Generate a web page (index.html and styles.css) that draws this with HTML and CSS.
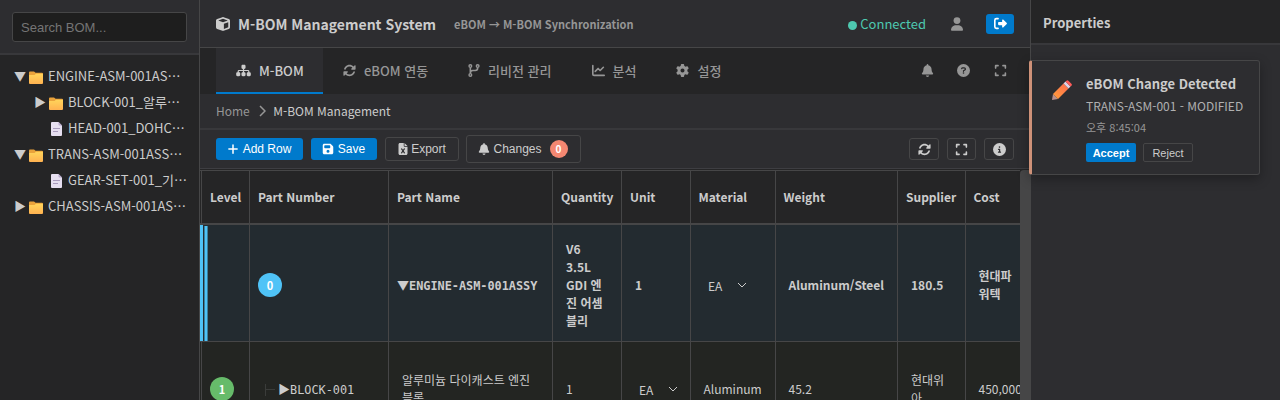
FILE: index.html
```html
<!DOCTYPE html>
<html lang="ko">
<head>
<meta charset="utf-8">
<title>M-BOM Management System</title>
<link rel="stylesheet" href="styles.css">
</head>
<body>
<svg class="defs" width="0" height="0">
<defs>
<linearGradient id="fg" x1="0" y1="0" x2="0" y2="1"><stop offset="0" stop-color="#ffd45a"/><stop offset="1" stop-color="#ffb251"/></linearGradient>
<linearGradient id="pg" x1="1" y1="0" x2="0" y2="1"><stop offset="0" stop-color="#ff6a50"/><stop offset="1" stop-color="#ff9f3a"/></linearGradient>
<symbol id="folder" viewBox="0 0 14 13"><path d="M0 1.5Q0 .5 1 .5h4l1.6 1.3H13q1 0 1 1V6H0z" fill="#e9a23b"/><path d="M0 4h5.5l1.5-1.2h7V12q0 1-1 1H1q-1 0-1-1z" fill="url(#fg)"/></symbol>
<symbol id="doc" viewBox="0 0 11 14"><path d="M1 0h6.5L11 3.5V13q0 1-1 1H1q-1 0-1-1V1q0-1 1-1z" fill="#e6dff0"/><path d="M7.5 0L11 3.5H8.5q-1 0-1-1z" fill="#b9aacb"/><path d="M2 6.5h7M2 9.5h5" stroke="#a99bbd" stroke-width="1.2"/></symbol>
<symbol id="cube" viewBox="0 0 512 512"><path d="M234.5 5.7c13.900-5 29.100-5 43.100 0l192 68.600C495 83.400 512 107.500 512 134.600V377.400c0 27-17 51.200-42.500 60.300l-192 68.600c-13.900 5-29.100 5-43.100 0l-192-68.600C17 428.600 0 404.500 0 377.400V134.600c0-27 17-51.200 42.500-60.300l192-68.600zM256 66L82.300 128 256 190l173.700-62L256 66zm32 368.600l160-57.100v-188L288 246.600v188z"/></symbol>
<symbol id="sitemap" viewBox="0 0 576 512"><path d="M208 80c0-26.500 21.500-48 48-48h64c26.500 0 48 21.500 48 48v64c0 26.500-21.500 48-48 48h-8v40h152c30.900 0 56 25.100 56 56v32h8c26.500 0 48 21.500 48 48v64c0 26.500-21.500 48-48 48h-64c-26.500 0-48-21.500-48-48v-64c0-26.500 21.500-48 48-48h8v-32c0-4.400-3.600-8-8-8H312v40h8c26.500 0 48 21.500 48 48v64c0 26.500-21.500 48-48 48h-64c-26.500 0-48-21.500-48-48v-64c0-26.500 21.500-48 48-48h8v-40H112c-4.400 0-8 3.600-8 8v32h8c26.500 0 48 21.500 48 48v64c0 26.500-21.500 48-48 48H48c-26.500 0-48-21.500-48-48v-64c0-26.500 21.500-48 48-48h8v-32c0-30.900 25.100-56 56-56h152v-40h-8c-26.500 0-48-21.500-48-48z"/></symbol>
<symbol id="sync" viewBox="0 0 512 512"><path d="M142.900 142.900c62.200-62.200 162.700-62.500 225.300-1L327 183c-6.900 6.900-8.900 17.200-5.200 26.200s12.500 14.800 22.200 14.800H472c13.300 0 24-10.700 24-24V72c0-9.700-5.800-18.500-14.800-22.200s-19.300-1.700-26.200 5.200L413.400 96.600c-87.600-86.500-228.700-86.200-315.800 1C73.200 122 55.600 150.700 44.800 181.400c-5.900 16.700 2.900 34.900 19.500 40.800s34.900-2.900 40.800-19.500c7.700-21.800 20.200-42.300 37.800-59.800zM16 312V440c0 9.700 5.800 18.500 14.800 22.200s19.300 1.700 26.200-5.200l41.600-41.600c87.600 86.500 228.700 86.200 315.800-1c24.400-24.400 42.100-53.100 52.900-83.700c5.900-16.700-2.900-34.900-19.500-40.800s-34.900 2.900-40.800 19.500c-7.700 21.800-20.200 42.300-37.800 59.800c-62.200 62.200-162.700 62.500-225.300 1L185 329c6.900-6.900 8.900-17.200 5.200-26.200s-12.500-14.800-22.200-14.800H40c-13.300 0-24 10.700-24 24z"/></symbol>
<symbol id="branch" viewBox="0 0 448 512"><g fill="none" stroke="currentColor"><circle cx="80" cy="80" r="52" stroke-width="56"/><circle cx="368" cy="80" r="52" stroke-width="56"/><circle cx="80" cy="432" r="52" stroke-width="56"/><path d="M80 150v212M80 352c0-53 43-96 96-96h96c53 0 96-43 96-96v-10" stroke-width="64"/></g></symbol>
<symbol id="chart" viewBox="0 0 512 512"><path d="M32 64v336q0 48 48 48h400M128 288l112-112 80 80 128-128" fill="none" stroke="currentColor" stroke-width="64" stroke-linecap="round" stroke-linejoin="round"/></symbol>
<symbol id="gear" viewBox="0 0 512 512"><path d="M495.9 166.6c3.2 8.7 .5 18.4-6.4 24.6l-43.3 39.4c1.100 8.300 1.700 16.800 1.700 25.400s-.6 17.100-1.700 25.400l43.300 39.400c6.900 6.200 9.600 15.900 6.400 24.600c-4.400 11.900-9.700 23.300-15.800 34.300l-4.700 8.100c-6.600 11-14 21.400-22.100 31.200c-5.900 7.200-15.700 9.600-24.500 6.800l-55.700-17.700c-13.400 10.300-28.200 18.900-44 25.400l-12.500 57.100c-2 9.100-9 16.300-18.200 17.800c-13.800 2.300-28 3.500-42.500 3.500s-28.700-1.200-42.500-3.500c-9.200-1.500-16.200-8.700-18.200-17.800l-12.500-57.100c-15.800-6.500-30.600-15.100-44-25.400L83.100 425.900c-8.800 2.800-18.600 .3-24.500-6.800c-8.100-9.800-15.500-20.200-22.100-31.200l-4.700-8.100c-6.100-11-11.400-22.400-15.800-34.300c-3.200-8.700-.5-18.400 6.400-24.600l43.300-39.400C64.600 273.100 64 264.600 64 256s.6-17.100 1.700-25.400L22.400 191.200c-6.900-6.200-9.600-15.900-6.400-24.600c4.400-11.900 9.700-23.300 15.800-34.300l4.700-8.100c6.600-11 14-21.400 22.100-31.200c5.900-7.200 15.700-9.600 24.500-6.800l55.700 17.700c13.400-10.300 28.200-18.900 44-25.400l12.500-57.100c2-9.100 9-16.300 18.200-17.800C227.300 1.200 241.500 0 256 0s28.700 1.200 42.500 3.500c9.200 1.500 16.200 8.700 18.200 17.800l12.500 57.100c15.800 6.500 30.600 15.100 44 25.400l55.700-17.700c8.800-2.800 18.600-.3 24.500 6.800c8.100 9.800 15.500 20.200 22.100 31.200l4.700 8.100c6.100 11 11.400 22.400 15.800 34.300zM256 336a80 80 0 1 0 0-160 80 80 0 1 0 0 160z"/></symbol>
<symbol id="bell" viewBox="0 0 448 512"><path d="M224 0c-17.700 0-32 14.300-32 32V51.200C119 66 64 130.600 64 208v18.800c0 47-17.300 92.400-48.500 127.600l-7.400 8.300c-8.400 9.400-10.400 22.900-5.300 34.400S19.400 416 32 416H416c12.600 0 24-7.400 29.200-18.900s3.100-25-5.300-34.400l-7.400-8.300C401.300 319.200 384 273.900 384 226.800V208c0-77.400-55-142-128-156.800V32c0-17.700-14.300-32-32-32zm45.300 493.300c12-12 18.700-28.300 18.700-45.300H160c0 17 6.700 33.300 18.700 45.300s28.300 18.700 45.300 18.700s33.300-6.700 45.300-18.700z"/></symbol>
<symbol id="help" viewBox="0 0 512 512"><circle cx="256" cy="256" r="256"/><path d="M184 185c5-20 20-33 42-33h56c28 0 49 20 49 45 0 17-9 32-25 41l-50 30v22" fill="none" stroke="#252526" stroke-width="48" stroke-linecap="round"/><circle cx="256" cy="352" r="32" fill="#252526"/></symbol>
<symbol id="expand" viewBox="0 0 448 512"><path d="M32 160V64h96M320 64h96v96M32 352v96h96M416 352v96h-96" fill="none" stroke="currentColor" stroke-width="64" stroke-linecap="round" stroke-linejoin="round"/></symbol>
<symbol id="info" viewBox="0 0 512 512"><circle cx="256" cy="256" r="256"/><path d="M216 248h44v112M216 360h80" fill="none" stroke="#2d2d30" stroke-width="48" stroke-linecap="round" stroke-linejoin="round"/><circle cx="256" cy="160" r="32" fill="#2d2d30"/></symbol>
<symbol id="user" viewBox="0 0 448 512"><circle cx="224" cy="128" r="128"/><path d="M178.300 304C79.800 304 0 383.800 0 482.300C0 498.700 13.300 512 29.700 512H418.300c16.400 0 29.700-13.300 29.700-29.700C448 383.800 368.200 304 269.700 304H178.300z"/></symbol>
<symbol id="logout" viewBox="0 0 512 512"><path d="M160 64H96q-64 0-64 64v256q0 64 64 64h64" fill="none" stroke="currentColor" stroke-width="64" stroke-linecap="round"/><path d="M503 273L361 409c-16 15-41 4-41-18v-71H192c-18 0-32-14-32-32v-64c0-18 14-32 32-32h128v-71c0-22 25-33 41-18l142 136c9 10 9 24 0 34z"/></symbol>
<symbol id="plus" viewBox="0 0 448 512"><path d="M224 80v352M48 256h352" fill="none" stroke="currentColor" stroke-width="64" stroke-linecap="round"/></symbol>
<symbol id="save" viewBox="0 0 448 512"><path fill-rule="evenodd" d="M64 32C28.700 32 0 60.700 0 96v320c0 35.300 28.700 64 64 64h320c35.300 0 64-28.700 64-64V173.300c0-17-6.700-33.300-18.700-45.300L352 50.700C340 38.700 323.700 32 306.700 32H64zm0 96c0-17.700 14.300-32 32-32h192c17.700 0 32 14.300 32 32v64c0 17.700-14.300 32-32 32H96c-17.700 0-32-14.300-32-32v-64zm160 160a64 64 0 1 1 0 128 64 64 0 1 1 0-128z"/></symbol>
<symbol id="excel" viewBox="0 0 384 512"><path d="M64 0C28.700 0 0 28.700 0 64v384c0 35.300 28.700 64 64 64h256c35.300 0 64-28.700 64-64V160H256c-17.700 0-32-14.300-32-32V0zM256 0v128h128z"/><path d="M132 252l120 168M252 252L132 420" stroke="#2d2d30" stroke-width="48" stroke-linecap="round"/></symbol>
<symbol id="pencil" viewBox="0 0 20 20"><path d="M0 20l1-6L6 19z" fill="#b8908f"/><path d="M1 14L11.500 3.500l5 5L6 19z" fill="url(#pg)"/><path d="M11.500 3.500L13.500 1.500l5 5-2 2z" fill="#ddd3e6"/><path d="M13.500 1.500L14.400.7q1-1 2 0l3 3q1 1 0 2l-.9.8z" fill="#ff5b59"/></symbol>
<symbol id="down" viewBox="0 0 10 6"><path d="M1 1l4 4 4-4" fill="none" stroke="currentColor" stroke-width="1"/></symbol>
<symbol id="next" viewBox="0 0 7 12"><path d="M1 1l5 5-5 5" fill="none" stroke="currentColor" stroke-width="1.500"/></symbol>
</defs>
</svg>
<div class="app">
<aside class="sidebar">
  <div class="search-wrap"><input class="search" placeholder="Search BOM..."></div>
  <div class="tree">
    <div class="node"><span class="arrow">▼</span><svg class="folder"><use href="#folder"/></svg><span>ENGINE-ASM-001AS…</span></div>
    <div class="node child"><span class="arrow">▶</span><svg class="folder"><use href="#folder"/></svg><span>BLOCK-001_알루…</span></div>
    <div class="node child"><span class="arrow"></span><svg class="doc"><use href="#doc"/></svg><span>HEAD-001_DOHC…</span></div>
    <div class="node"><span class="arrow">▼</span><svg class="folder"><use href="#folder"/></svg><span>TRANS-ASM-001ASS…</span></div>
    <div class="node child"><span class="arrow"></span><svg class="doc"><use href="#doc"/></svg><span>GEAR-SET-001_기…</span></div>
    <div class="node"><span class="arrow">▶</span><svg class="folder"><use href="#folder"/></svg><span>CHASSIS-ASM-001AS…</span></div>
  </div>
</aside>
<main class="main">
  <header class="top">
    <svg class="i14"><use href="#cube"/></svg><h1 class="title">M-BOM Management System</h1>
    <span class="subtitle">eBOM → M-BOM Synchronization</span>
    <div class="status"><i class="dot"></i>Connected</div>
    <svg class="user"><use href="#user"/></svg>
    <button class="logout"><svg class="i13"><use href="#logout"/></svg></button>
  </header>
  <nav class="tabs">
    <a class="tab active"><svg class="i15"><use href="#sitemap"/></svg>M-BOM</a>
    <a class="tab"><svg class="i13"><use href="#sync"/></svg>eBOM 연동</a>
    <a class="tab"><svg class="ibranch"><use href="#branch"/></svg>리비전 관리</a>
    <a class="tab"><svg class="i13"><use href="#chart"/></svg>분석</a>
    <a class="tab"><svg class="i13"><use href="#gear"/></svg>설정</a>
    <div class="tools"><svg class="i13"><use href="#bell"/></svg><svg class="i13"><use href="#help"/></svg><svg class="i13"><use href="#expand"/></svg></div>
  </nav>
  <div class="crumbs"><span>Home</span><svg class="next"><use href="#next"/></svg><b>M-BOM Management</b></div>
  <div class="toolbar">
    <button class="btn add primary"><svg class="i12"><use href="#plus"/></svg>Add Row</button>
    <button class="btn save primary"><svg class="i12"><use href="#save"/></svg>Save</button>
    <button class="btn export"><svg class="i12 narrow"><use href="#excel"/></svg>Export</button>
    <button class="btn changes"><svg class="i12"><use href="#bell"/></svg>Changes<span class="count">0</span></button>
    <div class="right">
      <button class="btn sq wide"><svg class="i13"><use href="#sync"/></svg></button>
      <button class="btn sq"><svg class="i13"><use href="#expand"/></svg></button>
      <button class="btn sq wide"><svg class="i13"><use href="#info"/></svg></button>
    </div>
  </div>
  <div class="grid-wrap">
    <div class="scroll">
    <table class="grid">
      <colgroup><col class="c0"><col class="c1"><col class="c2"><col class="c3"><col class="c4"><col class="c5"><col class="c6"><col class="c7"><col class="c8"></colgroup>
      <thead><tr><th class="first">Level</th><th>Part Number</th><th>Part Name</th><th>Quantity</th><th>Unit</th><th class="tight">Material</th><th class="tight">Weight</th><th>Supplier</th><th class="tight">Cost</th></tr></thead>
      <tbody>
      <tr class="root"><td class="mark"></td><td class="flat"><span class="level l0">0</span></td><td class="flat mono"><span class="tri">▼</span>ENGINE-ASM-001ASSY</td><td>V6<br>3.5L<br>GDI 엔<br>진 어셈<br>블리</td><td>1</td><td><div class="select">EA<svg class="down"><use href="#down"/></svg></div></td><td class="tight">Aluminum/Steel</td><td>180.5</td><td class="tight">현대파<br>워텍</td></tr>
      <tr class="sub"><td class="flat first"><span class="level l1">1</span></td><td class="flat mono"><span class="branch-line"></span><span class="tri">▶</span>BLOCK-001</td><td>알루미늄 다이캐스트 엔진<br>블록</td><td>1</td><td><div class="select">EA<svg class="down"><use href="#down"/></svg></div></td><td class="tight">Aluminum</td><td class="tight">45.2</td><td>현대위<br>아</td><td class="tight">450,000</td></tr>
      </tbody>
    </table>
    </div>
    <div class="scrollbar"></div>
  </div>
</main>
<aside class="props"><div class="props-head">Properties</div></aside>
</div>
<div class="toast">
  <svg class="pencil"><use href="#pencil"/></svg>
  <div class="toast-body">
    <div class="toast-title">eBOM Change Detected</div>
    <div class="toast-text">TRANS-ASM-001 - MODIFIED</div>
    <div class="toast-time">오후 8:45:04</div>
    <div class="toast-actions"><button class="accept">Accept</button><button class="reject">Reject</button></div>
  </div>
</div>
</body>
</html>
```
FILE: styles.css
```css
* { box-sizing: border-box; }
body { margin: 0; height: 400px; overflow: hidden; background: #1e1e1e; color: #ccc; font: 13px/18px "Noto Sans CJK KR", sans-serif; }
button, input { font-family: "Liberation Sans", Arial, sans-serif; margin: 0; }
svg { fill: currentColor; flex: none; display: block; }
.defs { position: absolute; }
.app { display: flex; height: 400px; }
.sidebar { width: 200px; flex: none; background: #252526; border-right: 1px solid #464647; }
.search-wrap { height: 55px; padding: 12px; background: #2d2d30; border-bottom: 2px solid #38383b; }
.search { display: block; width: 175px; height: 30px; padding: 0 8px; background: #1e1e1e; border: 1px solid #464647; border-radius: 3px; font-size: 13px; color: #ccc; }
.search::placeholder { color: #757575; }
.tree { padding-top: 8px; }
.node { display: flex; align-items: center; height: 26px; padding-left: 14px; white-space: nowrap; }
.child { padding-left: 34px; }
.arrow { width: 15px; font-size: 12px; }
.folder { width: 14px; height: 13px; margin: 2px 5px 0 0; }
.doc { width: 11px; height: 14px; margin: 2px 6px 0 2px; }
.main { width: 830px; flex: none; background: #1e1e1e; }
.i15 { width: 15px; height: 13px; }
.i14 { width: 14px; height: 14px; }
.i13 { width: 13px; height: 13px; }
.i12 { width: 12px; height: 12px; }
.ibranch { width: 12px; height: 13px; }
.top { display: flex; align-items: center; height: 48px; padding: 0 16px; background: #2d2d30; border-bottom: 1px solid #464647; }
.title { margin: 0 18px 0 8px; font-size: 14px; font-weight: 600; }
.subtitle { font-size: 11px; font-weight: 600; color: #969696; }
.status { display: flex; align-items: center; margin-left: auto; color: #4ec9b0; font-size: 13px; }
.dot { width: 9px; height: 9px; margin: 4px 3px 0 0; border-radius: 50%; background: #4ec9b0; }
.user { width: 12px; height: 14px; margin: 0 23.5px 0 24.5px; color: #969696; }
.logout { display: flex; align-items: center; justify-content: center; width: 28px; height: 20px; padding: 0; border: 0; border-radius: 3px; background: #007acc; color: #fff; }
.tabs { display: flex; height: 46px; padding: 0 23.5px 0 16px; background: #252526; color: #969696; font-weight: 500; }
.tab { display: flex; align-items: center; gap: 8px; padding: 1px 20px 0; border-bottom: 2px solid transparent; }
.tab.active { padding-right: 19.2px; background: #2d2d30; border-color: #007acc; color: #ccc; }
.tools { display: flex; align-items: center; gap: 23.5px; margin: 0 0 2px auto; }
.crumbs { display: flex; align-items: center; height: 36px; padding: 0 16px; background: #2d2d30; border-bottom: 2px solid #38383b; font-size: 12px; color: #969696; }
.crumbs b { font-weight: 400; color: #ccc; }
.next { width: 7px; height: 12px; margin: 0 7.500px 0 9px; }
.toolbar { display: flex; align-items: center; gap: 8px; height: 39px; padding: 0 16px; background: #2d2d30; border-bottom: 1px solid #3e3e42; }
.btn { display: flex; align-items: center; justify-content: center; gap: 4px; height: 24px; padding: 0; background: transparent; border: 1px solid #464647; border-radius: 3px; font-size: 12px; color: #ccc; }
.primary { height: 22px; border: 0; background: #007acc; color: #fff; }
.add { width: 87px; padding-right: 1px; }
.save { width: 66px; padding-right: 1px; }
.export { width: 73.5px; gap: 3.5px; }
.narrow { width: 10px; }
.changes { width: 115px; height: 28px; gap: 3px; padding-right: 1px; margin-left: -.5px; }
.count { width: 18px; height: 18px; margin-left: 5px; border-radius: 50%; background: #f48771; color: #fff; font: 700 10px/18px "Noto Sans CJK KR", sans-serif; }
.right { display: flex; gap: 8px; margin-left: auto; }
.sq { width: 29px; height: 22px; }
.wide { width: 30px; }
.grid-wrap { display: flex; height: 231px; padding-top: 1px; background: #252526; }
.scroll { width: 820px; height: 230px; overflow: hidden; }
.scrollbar { width: 10px; height: 230px; background: #464647; border-radius: 4px 0 0; }
.grid { width: 850px; table-layout: fixed; border-spacing: 0; font-size: 12px; }
.c0 { width: 50px; }
.c1 { width: 139px; }
.c2 { width: 164px; }
.c3, .c4 { width: 69px; }
.c5 { width: 85px; }
.c6 { width: 122px; }
.c7 { width: 68px; }
.c8 { width: 84px; }
.grid th { height: 55px; padding: 0 8px; text-align: left; font-weight: 700; background: #252526; border-top: 1px solid #464647; border-bottom: 2px solid #464647; border-right: 1px solid #464647; }
.grid th.first { padding-left: 10px; padding-right: 0; }
.grid th.tight { padding-left: 7.500px; }
.grid td { padding: 0 13px; border-right: 1px solid #464647; border-bottom: 1px solid #464647; white-space: nowrap; }
.grid td.tight { padding-left: 12.500px; }
.grid .flat { padding: 0 8px; }
.grid .first { padding-left: 10px; background-image: linear-gradient(90deg, transparent 1px, #464647 1px 2px, transparent 2px); }
.grid .root td { height: 117px; padding-top: 4px; background-color: #232b30; font-weight: 700; }
.root .mark { background-image: linear-gradient(90deg, #4fc3f7 3px, transparent 3px), linear-gradient(#232b30, #232b30), linear-gradient(90deg, transparent 4px, #397f9d 4px 5px, #4fc3f7 5px 7px, #397f9d 7px 8px, transparent 8px); background-size: auto, 8px 1px, auto; background-repeat: no-repeat; }
.sub td { height: 95px; background-color: #232522; }
.grid .mono { font-family: "DejaVu Sans Mono", monospace; font-size: 11.85px; }
.tri { font-family: "Noto Sans CJK KR", sans-serif; font-size: 12px; font-weight: 400; }
.level { display: block; width: 24px; height: 24px; border-radius: 50%; text-align: center; color: #fff; font: 700 11px/24px "Noto Sans CJK KR", sans-serif; }
.l0 { background: #4fc3f7; }
.l1 { background: #66bb6a; }
.branch-line { display: inline-block; width: 10px; height: 12px; margin: 0 3px 0 7px; vertical-align: middle; border-left: 1px solid #3a3c3a; background: linear-gradient(#3a3c3a, #3a3c3a) 0 5px / 10px 1px no-repeat; }
.select { display: flex; align-items: center; justify-content: space-between; width: 43px; padding: 2px 0 0 4px; font-weight: 400; }
.down { width: 10px; height: 6px; margin-top: -2px; }
.props { flex: 1; background: #2d2d30; border-left: 1px solid #464647; }
.props-head { height: 45px; padding: 14px 12px; background: #252526; border-bottom: 2px solid #38383b; font-weight: 700; }
.toast { position: absolute; left: 1029px; top: 60px; display: flex; width: 231px; height: 115px; padding: 14px 15px 0 20px; background: #2d2d30; border: 1px solid #464647; border-left: 3px solid #ce9178; border-radius: 3px; box-shadow: 0 4px 12px rgba(0,0,0,.3); }
.pencil { width: 20px; height: 20px; margin: 5px 14px 0 0; }
.toast-body { white-space: nowrap; }
.toast-title { font-size: 13px; font-weight: 700; }
.toast-text { margin-top: 4px; font-size: 12px; color: #b0b0b0; }
.toast-time { margin-top: 3px; font-size: 11px; color: #969696; }
.toast-actions { display: flex; gap: 7px; margin-top: 7px; }
.accept, .reject { width: 50px; height: 19px; padding: 0; border: 0; border-radius: 2px; background: #007acc; color: #fff; font-size: 11px; }
.accept { font-weight: 700; }
.reject { background: transparent; border: 1px solid #464647; color: #ccc; }
```
